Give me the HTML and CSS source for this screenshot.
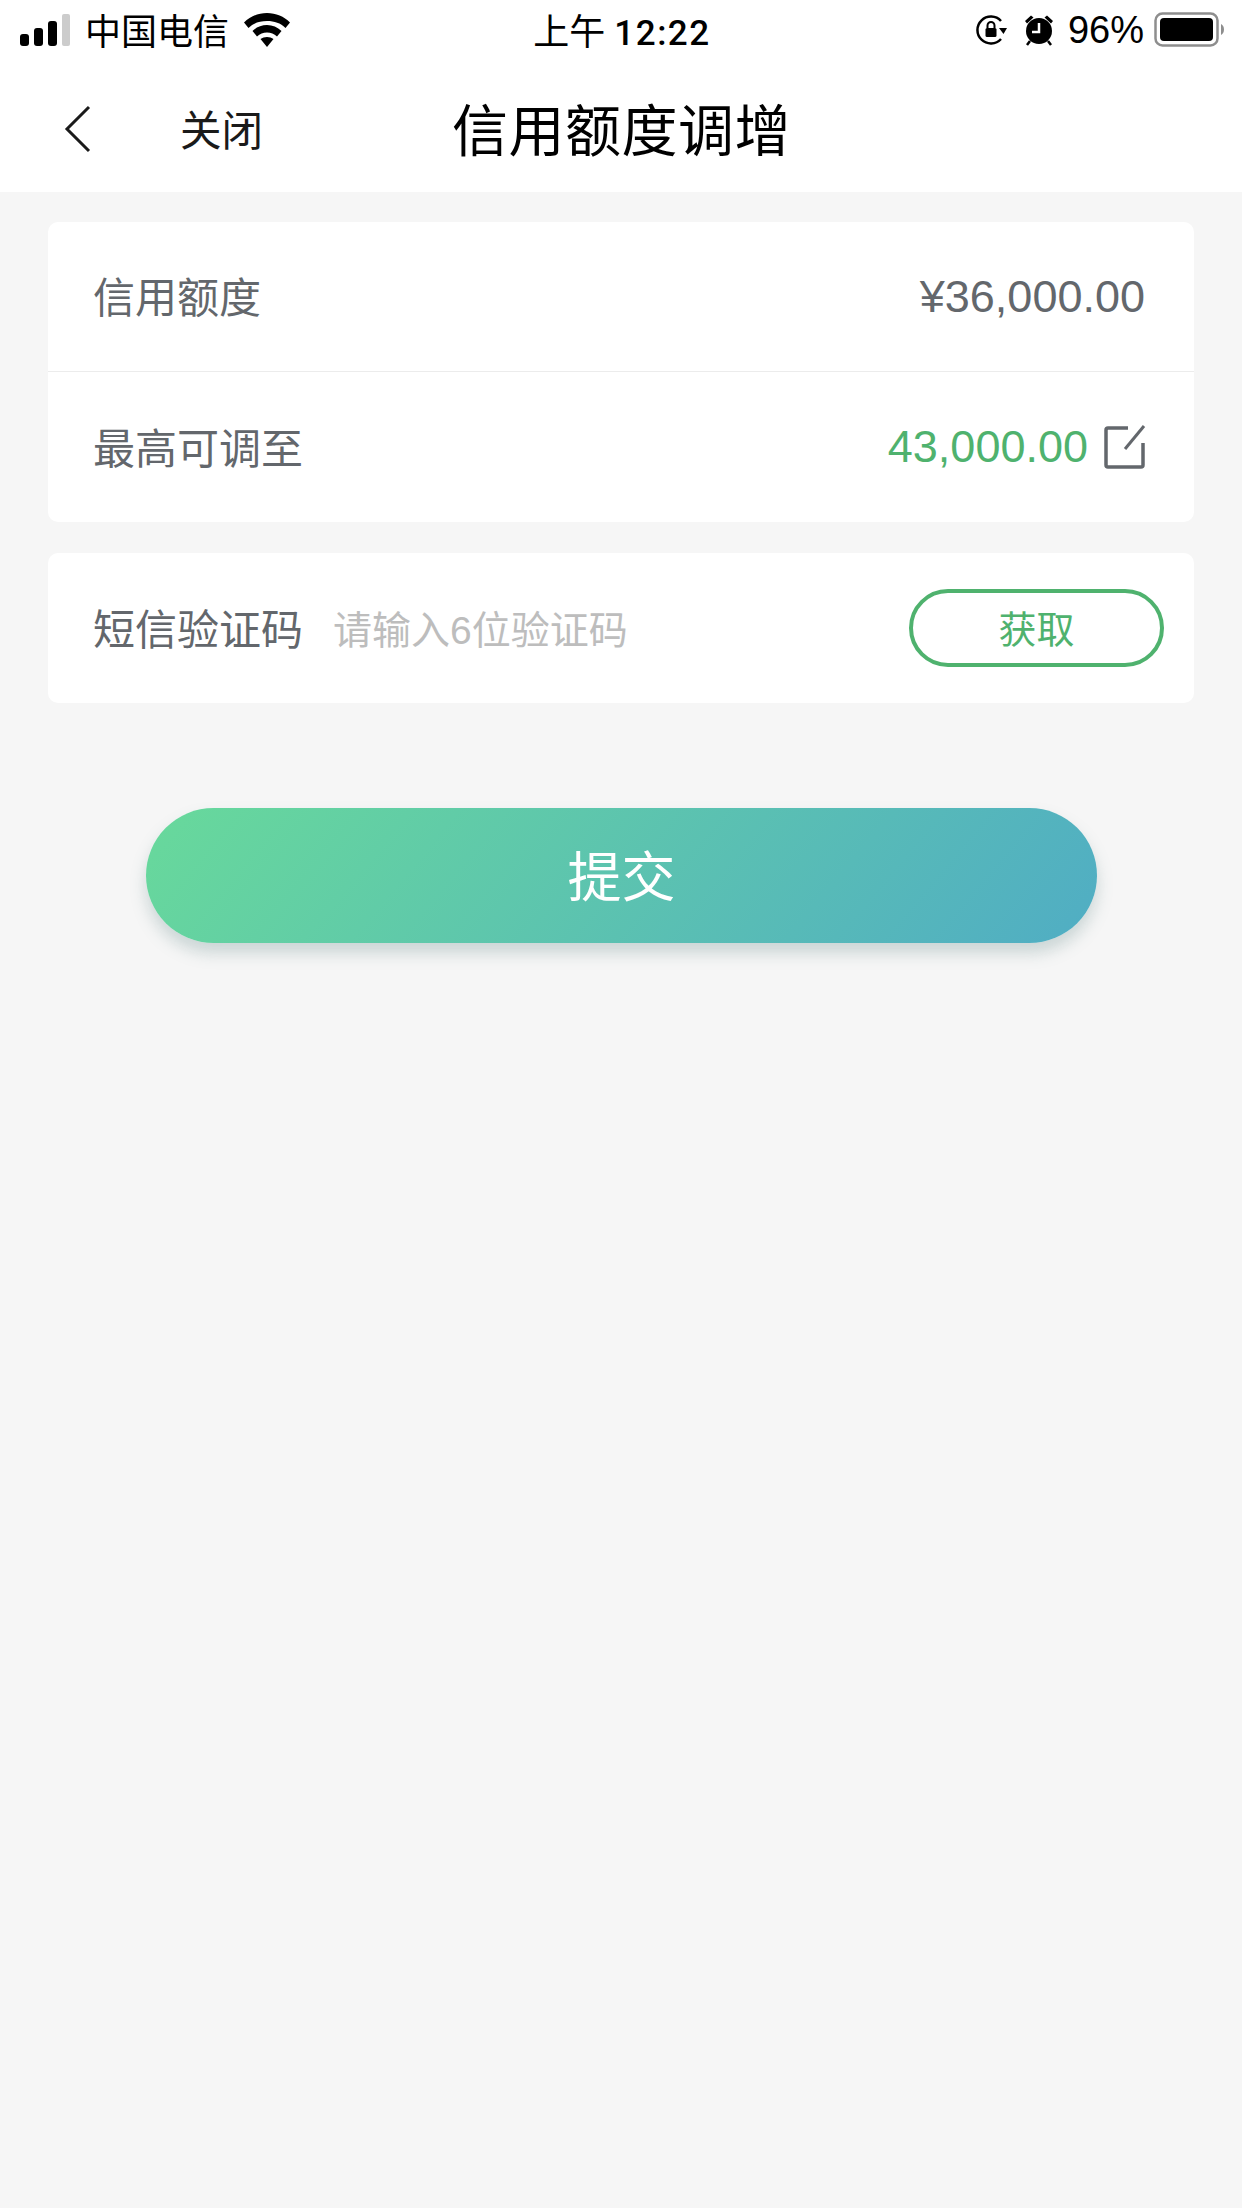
FILE: index.html
```html
<!DOCTYPE html>
<html lang="zh-CN">
<head>
    <meta charset="UTF-8">
    <meta name="viewport" content="width=device-width, initial-scale=1.0">
    <title>信用额度调增</title>
    <link rel="stylesheet" href="styles.css">
</head>
<body>
    <header class="top">
        <div class="status-bar">
            <div class="status-left">
                <svg class="signal" width="52" height="32" viewBox="0 0 52 32">
                    <rect x="0" y="20" width="9" height="12" rx="3" fill="#000"/>
                    <rect x="14" y="14" width="9" height="18" rx="3" fill="#000"/>
                    <rect x="28" y="7" width="9" height="25" rx="3" fill="#000"/>
                    <rect x="42" y="0" width="8" height="32" rx="2" fill="#ccc"/>
                </svg>
                <span class="carrier">中国电信</span>
                <svg class="wifi" width="46" height="34" viewBox="0 0 46 34">
                    <path d="M23 0C14 0 6 3.500 0 9.500L4.500 15C9.500 10 15.500 8 23 8S36.500 10 41.500 15L46 9.500C40 3.500 32 0 23 0Z" fill="#000"/>
                    <path d="M23 12C17.500 12 12.500 14 8.500 18L13 23.500C16 20.700 19 19.500 23 19.500S30 20.700 33 23.500L37.500 18C33.500 14 28.500 12 23 12Z" fill="#000"/>
                    <path d="M23 24C20.500 24 18.300 24.800 16.500 26L23 34L29.500 26C27.700 24.800 25.500 24 23 24Z" fill="#000"/>
                </svg>
            </div>
            <div class="status-time"><span class="time-day">上午</span><span class="time-num">12:22</span></div>
            <div class="status-right">
                <svg width="32" height="32" viewBox="0 0 32 32">
                    <path d="M26 25A13.500 13.500 0 1 1 26 7" fill="none" stroke="#000" stroke-width="2.500"/>
                    <path d="M24 14L32 14L28.500 20Z" fill="#000"/>
                    <rect x="10.500" y="14" width="11" height="9" rx="1.500" fill="#000"/>
                    <path d="M12.500 14V11.500A3.500 3.500 0 0 1 19.500 11.500V14" fill="none" stroke="#000" stroke-width="2"/>
                </svg>
                <svg class="alarm" width="30" height="32" viewBox="0 0 30 32">
                    <circle cx="15" cy="17" r="13" fill="#000"/>
                    <path d="M1 7L7 1.500L9.500 3.500L3 9.500Z M29 7L23 1.500L20.500 3.500L27 9.500Z" fill="#000"/>
                    <path d="M6 27L3 31M24 27L27 31" stroke="#000" stroke-width="2.500"/>
                    <path d="M15 9V18H8" fill="none" stroke="#fff" stroke-width="2.500"/>
                </svg>
                <span class="battery-pct">96%</span>
                <svg class="battery" width="70" height="36" viewBox="0 0 70 36">
                    <rect x="1.500" y="1.500" width="62" height="32" rx="7" fill="none" stroke="#8e8e8e" stroke-width="2.500"/>
                    <rect x="6" y="6" width="53" height="23" rx="4" fill="#000"/>
                    <path d="M67 12C69 13 70 15 70 17.500S69 22 67 23Z" fill="#8e8e8e"/>
                </svg>
            </div>
        </div>
        <nav class="nav-bar">
            <svg class="back" width="28" height="48" viewBox="0 0 28 48">
                <path d="M25 2L3 24L25 46" fill="none" stroke="#1a1a1a" stroke-width="3"/>
            </svg>
            <span class="close">关闭</span>
            <h1 class="title">信用额度调增</h1>
        </nav>
    </header>

    <main class="content">
        <section class="card">
            <div class="row row-line">
                <span class="label">信用额度</span>
                <span class="amount">¥36,000.00</span>
            </div>
            <div class="row">
                <span class="label">最高可调至</span>
                <div class="max-value">
                    <span class="amount amount-green">43,000.00</span>
                    <svg width="42" height="44" viewBox="0 0 42 44">
                        <path d="M24 3H4Q2 3 2 5V40Q2 42 4 42H37Q39 42 39 40V18" fill="none" stroke="#63676c" stroke-width="3.500"/>
                        <path d="M21 24L40 1" fill="none" stroke="#63676c" stroke-width="3"/>
                    </svg>
                </div>
            </div>
        </section>

        <section class="card">
            <div class="row row-code">
                <span class="label">短信验证码</span>
                <span class="placeholder">请输入6位验证码</span>
                <button class="get-btn">获取</button>
            </div>
        </section>

        <button class="submit">提交</button>
    </main>
</body>
</html>
```

FILE: styles.css
```css
* {
    box-sizing: border-box;
}
body {
    margin: 0;
    min-height: 2208px;
    background: #f6f6f6;
    font-family: "Liberation Sans", "Noto Sans CJK SC", sans-serif;
}
.top {
    height: 192px;
    background: #fff;
}
.status-bar {
    height: 60px;
    padding: 0 18px 0 20px;
    display: flex;
    align-items: center;
    justify-content: space-between;
    color: #000;
}
.status-left {
    width: 400px;
    display: flex;
    align-items: center;
}
.signal {
    margin-right: 13px;
}
.carrier {
    font-size: 36px;
    margin-right: 15px;
    padding-bottom: 2px;
}
.status-time {
    font-size: 36px;
    padding-bottom: 2px;
}
.time-num {
    margin-left: 9px;
    font-family: Roboto, "Liberation Sans", sans-serif;
    font-size: 35px;
    font-weight: 500;
    letter-spacing: 1.500px;
}
.status-right {
    width: 400px;
    display: flex;
    align-items: center;
    justify-content: flex-end;
}
.alarm {
    margin-left: 17px;
}
.battery-pct {
    font-size: 38px;
    margin-left: 14px;
    margin-right: 10px;
}
.nav-bar {
    height: 132px;
    padding: 6px 0 0 64px;
    display: flex;
    align-items: center;
    position: relative;
}
.back {
    margin-right: 88px;
}
.close {
    font-size: 41.500px;
    color: #1a1a1a;
    padding-bottom: 2px;
}
.title {
    position: absolute;
    left: 452px;
    top: 50%;
    transform: translateY(-50%);
    margin: 0;
    font-size: 56px;
    font-weight: 400;
    letter-spacing: 0.500px;
    color: #000;
}
.content {
    padding: 30px 48px 0;
}
.card {
    background: #fff;
    border-radius: 10px;
    margin-bottom: 31px;
}
.row {
    height: 150px;
    padding: 0 49px 0 45px;
    display: flex;
    align-items: center;
    justify-content: space-between;
}
.row-line {
    border-bottom: 1px solid #ececec;
}
.label {
    font-size: 42px;
    color: #63676c;
    padding-bottom: 4px;
}
.amount {
    font-size: 45px;
    color: #63676c;
}
.amount-green {
    color: #4fb26e;
}
.max-value {
    display: flex;
    align-items: center;
    gap: 16px;
    margin-right: -1px;
}
.row-code {
    padding-right: 30px;
    justify-content: flex-start;
}
.placeholder {
    font-size: 39px;
    color: #bdbdbd;
    margin-left: 30px;
    padding-bottom: 2px;
}
.get-btn {
    margin-left: auto;
    width: 255px;
    height: 78px;
    padding: 0 0 4px;
    border: 4px solid #4fb26e;
    border-radius: 39px;
    background: #fff;
    color: #4fb26e;
    font-family: inherit;
    font-size: 38px;
}
.submit {
    display: block;
    width: 951px;
    height: 135px;
    margin: 105px 0 0 98px;
    padding: 0 0 4px;
    border: none;
    border-radius: 68px;
    background: linear-gradient(130deg, #68d99b, #50adc4);
    box-shadow: 0 10px 16px rgba(90, 130, 130, 0.28);
    color: #fff;
    font-family: inherit;
    font-size: 54px;
}
```
